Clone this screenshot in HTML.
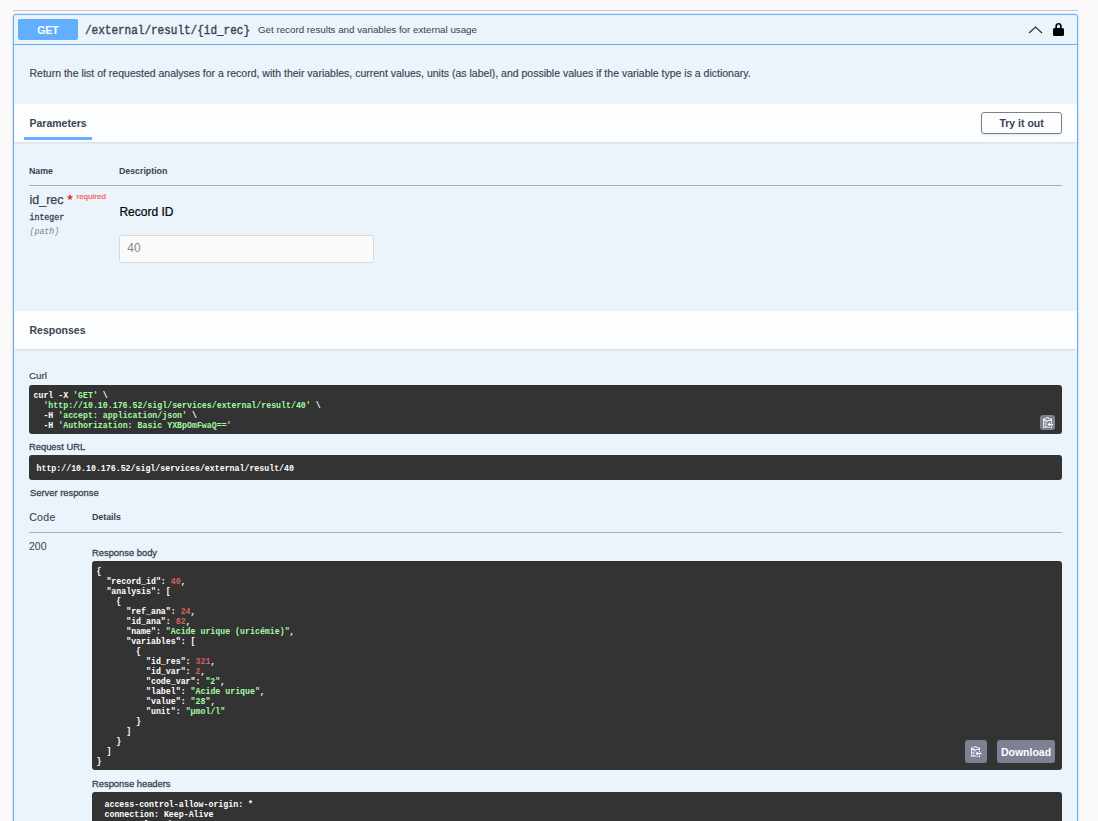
<!DOCTYPE html>
<html><head><meta charset="utf-8">
<style>
html,body{margin:0;padding:0}
body{width:1098px;height:821px;overflow:hidden;background:#fafafa;position:relative;font-family:"Liberation Sans",sans-serif;color:#3b4151}
.a{position:absolute;white-space:pre;line-height:1}
.mono{font-family:"Liberation Mono",monospace}
#tagline{left:13px;top:10px;width:1065px;height:1px;background:#c4c6cb}
#op{left:13px;top:14px;width:1063px;height:900px;border:1px solid #61affe;border-radius:3px;background:#ebf3fb;box-shadow:0 0 3px rgba(0,0,0,.19)}
#sumline{left:13px;top:44px;width:1065px;height:1px;background:#61affe}
#get{left:18px;top:19px;width:60px;height:21px;border-radius:2px;background:#61affe;color:#fff;font-weight:bold;font-size:10.5px;text-align:center;line-height:22.5px}
.sec{left:14px;width:1063px;background:#fbfdfe;box-shadow:0 1px 2px rgba(0,0,0,.1)}
.pre{background:#333;border-radius:3px;left:29px;width:1033px}
.code{font-family:"Liberation Mono",monospace;font-weight:bold;font-size:8.25px;color:#fff;line-height:10px;white-space:pre}
.g{color:#a2fca2}
.n{color:#d36363}
.copy{background:#7d8293;border-radius:3px}
.th{font-size:9.5px;font-weight:bold;transform:scaleX(.925);transform-origin:0 0}
.lbl{font-size:9.8px;-webkit-text-stroke:.3px #3b4151;transform:scaleX(.955);transform-origin:0 0}
</style></head><body>
<div class="a" id="tagline"></div>
<div class="a" id="op"></div>
<div class="a" id="sumline"></div>
<div class="a" id="get">GET</div>
<div class="a mono" style="left:85px;top:25.5px;font-size:11px;color:#3b4151;-webkit-text-stroke:.35px #3b4151;transform:scaleY(1.1);transform-origin:0 100%">/external/result/{id_rec}</div>
<div class="a" style="left:258px;top:25px;font-size:9.75px;color:#3b4151">Get record results and variables for external usage</div>
<svg class="a" style="left:1027px;top:24px" width="17" height="11" viewBox="0 0 17 11"><path d="M2 9 L8.5 3 L15 9" fill="none" stroke="#333" stroke-width="1.2"/></svg>
<svg class="a" style="left:1052px;top:22px" width="13" height="15" viewBox="0 0 13 15"><path d="M4.2 6.5 V4.05 A2.3 2.3 0 0 1 8.8 4.05 V6.5" fill="none" stroke="#000" stroke-width="1.7"/><rect x="1" y="6" width="11" height="8" rx="1.5" fill="#000"/></svg>

<div class="a" style="left:29.5px;top:68px;font-size:10.5px;-webkit-text-stroke:.15px #3b4151">Return the list of requested analyses for a record, with their variables, current values, units (as label), and possible values if the variable type is a dictionary.</div>

<div class="a sec" style="top:104px;height:37.5px"></div>
<div class="a" style="left:29.5px;top:118px;font-size:10.5px;font-weight:bold">Parameters</div>
<div class="a" style="left:24px;top:137px;width:68px;height:3px;background:#61affe"></div>
<div class="a" style="left:981px;top:112px;width:78.5px;height:20.3px;border:1.5px solid #808080;border-radius:3px;box-shadow:0 1px 2px rgba(0,0,0,.1);font-size:10.5px;font-weight:bold;text-align:center;line-height:21.3px;text-indent:0.6px;background:transparent">Try it out</div>

<div class="a th" style="left:29.3px;top:165.7px">Name</div>
<div class="a th" style="left:119.4px;top:165.7px">Description</div>
<div class="a" style="left:29px;top:185px;width:1033px;height:1px;background:#a9aeb8"></div>
<div class="a" style="left:29.5px;top:193.8px;font-size:12.5px;-webkit-text-stroke:.25px #3b4151">id_rec</div>
<div class="a" style="left:67.5px;top:192.6px;font-size:13px;color:#ff0000;-webkit-text-stroke:.3px #f00">*</div>
<div class="a" style="left:76.5px;top:193.3px;font-size:8px;color:#f55a60;-webkit-text-stroke:.2px #f55a60">required</div>
<div class="a mono" style="left:29.5px;top:213.6px;font-size:8.25px;-webkit-text-stroke:.3px #3b4151">integer</div>
<div class="a mono" style="left:29.5px;top:227.5px;font-size:8.25px;font-style:italic;color:gray">(path)</div>
<div class="a" style="left:119.4px;top:206px;font-size:12px;color:#000;-webkit-text-stroke:.2px #000">Record ID</div>
<div class="a" style="left:119px;top:235px;width:253px;height:26px;border:1px solid #d9d9d9;border-radius:3px;background:#fafafa"></div>
<div class="a" style="left:127.3px;top:242px;font-size:12px;color:#888">40</div>

<div class="a sec" style="top:311px;height:37.5px"></div>
<div class="a" style="left:29.5px;top:325px;font-size:10.5px;font-weight:bold">Responses</div>

<div class="a" style="left:29px;top:370.6px;font-size:9.75px;-webkit-text-stroke:.2px #3b4151">Curl</div>
<div class="a pre" style="top:385px;height:49px"></div>
<div class="a code" style="left:33.5px;top:391px">curl -X <span class="g">'GET'</span> \
  <span class="g">'http://10.10.176.52/sigl/services/external/result/40'</span> \
  -H <span class="g">'accept: application/json'</span> \
  -H <span class="g">'Authorization: Basic YXBpOmFwaQ=='</span></div>
<div class="a copy" style="left:1040px;top:415px;width:15px;height:15px"></div>
<svg width="10.5" height="10.5" viewBox="0 1 14 14" style="position:absolute;left:1042.5px;top:417px"><path fill="#fff" fill-rule="evenodd" d="M2 13h4v1H2v-1zm5-6H2v1h5V7zm2 3V8l-3 3 3 3v-2h5v-2H9zM4.5 9H2v1h2.5V9zM2 12h2.5v-1H2v1zm9 1h1v2c-.02.28-.11.52-.3.7-.19.18-.42.28-.7.3H1c-.55 0-1-.45-1-1V4c0-.55.45-1 1-1h3c0-1.11.89-2 2-2 1.11 0 2 .89 2 2h3c.55 0 1 .45 1 1v5h-1V6H1v9h10v-2zM2 5h8c0-.55-.45-1-1-1H8c-.55 0-1-.45-1-1 0-.55-.45-1-1-1-.55 0-1 .45-1 1 0 .55-.45 1-1 1H3c-.55 0-1 .45-1 1z"/></svg>

<div class="a lbl" style="left:29.3px;top:442.3px">Request URL</div>
<div class="a pre" style="top:455px;height:25px"></div>
<div class="a code" style="left:36.5px;top:464px">http://10.10.176.52/sigl/services/external/result/40</div>
<div class="a lbl" style="left:29.9px;top:488.3px">Server response</div>
<div class="a" style="left:29.2px;top:511.9px;font-size:10.5px;letter-spacing:.35px;-webkit-text-stroke:.1px #3b4151">Code</div>
<div class="a th" style="left:92.3px;top:512.1px">Details</div>
<div class="a" style="left:29px;top:532px;width:1033px;height:1px;background:#a9aeb8"></div>
<div class="a" style="left:29px;top:541px;font-size:10.5px">200</div>
<div class="a lbl" style="left:92.4px;top:548.3px">Response body</div>
<div class="a pre" style="left:92px;top:561px;width:970px;height:208.5px"></div>
<div class="a code" style="left:96.5px;top:567px">{
  "record_id": <span class="n">40</span>,
  "analysis": [
    {
      "ref_ana": <span class="n">24</span>,
      "id_ana": <span class="n">82</span>,
      "name": <span class="g">"Acide urique (uricémie)"</span>,
      "variables": [
        {
          "id_res": <span class="n">321</span>,
          "id_var": <span class="n">2</span>,
          "code_var": <span class="g">"2"</span>,
          "label": <span class="g">"Acide urique"</span>,
          "value": <span class="g">"28"</span>,
          "unit": <span class="g">"µmol/l"</span>
        }
      ]
    }
  ]
}</div>
<div class="a copy" style="left:965px;top:740px;width:22px;height:23px"></div>
<svg width="10.5" height="10.5" viewBox="0 1 14 14" style="position:absolute;left:971.2px;top:746.3px"><path fill="#fff" fill-rule="evenodd" d="M2 13h4v1H2v-1zm5-6H2v1h5V7zm2 3V8l-3 3 3 3v-2h5v-2H9zM4.5 9H2v1h2.5V9zM2 12h2.5v-1H2v1zm9 1h1v2c-.02.28-.11.52-.3.7-.19.18-.42.28-.7.3H1c-.55 0-1-.45-1-1V4c0-.55.45-1 1-1h3c0-1.11.89-2 2-2 1.11 0 2 .89 2 2h3c.55 0 1 .45 1 1v5h-1V6H1v9h10v-2zM2 5h8c0-.55-.45-1-1-1H8c-.55 0-1-.45-1-1 0-.55-.45-1-1-1-.55 0-1 .45-1 1 0 .55-.45 1-1 1H3c-.55 0-1 .45-1 1z"/></svg>
<div class="a copy" style="left:997px;top:740px;width:58px;height:23px;color:#fff;font-weight:bold;font-size:10.5px;text-align:center;line-height:24.6px">Download</div>
<div class="a lbl" style="left:92.1px;top:778.5px">Response headers</div>
<div class="a pre" style="left:92px;top:792px;width:970px;height:60px"></div>
<div class="a code" style="left:104.5px;top:800px">access-control-allow-origin: *
connection: Keep-Alive
content-length: 368</div>
</body></html>
